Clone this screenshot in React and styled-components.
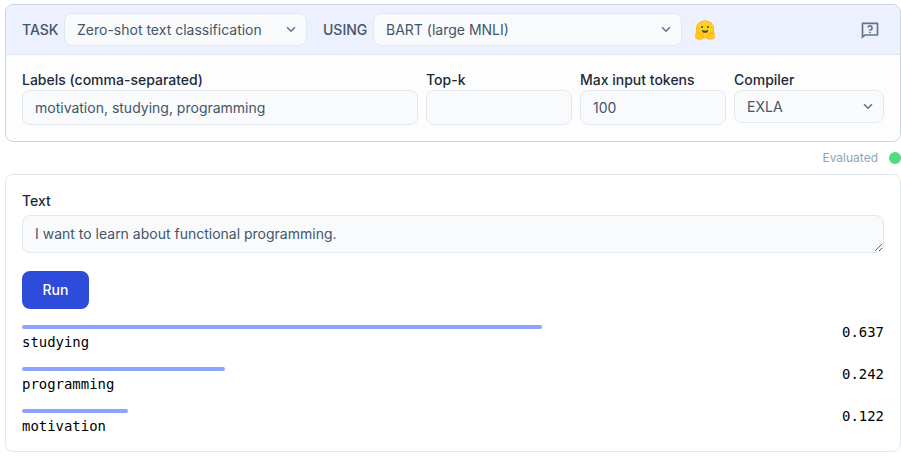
import React from "react";
import styled, { createGlobalStyle, css } from "styled-components";
import { RiQuestionnaireLine } from "react-icons/ri";

const GlobalStyle = createGlobalStyle`
  *, *::before, *::after { box-sizing: border-box; }
  body {
    margin: 0;
    background: #fff;
    font-family: Inter, sans-serif;
    font-size: 14px;
    line-height: 20px;
  }
`;

const Page = styled.main`
  display: flex;
  flex-direction: column;
  width: 901px;
  height: 457px;
  padding: 4px 0 0 5px;
`;

const SmartCell = styled.section`
  height: 138px;
  border: 1px solid #cad5e0;
  border-radius: 8px;
  background: #fdfdfd;
  overflow: hidden;
`;

const Header = styled.header`
  display: flex;
  align-items: center;
  height: 50px;
  padding: 0 16px;
  border-bottom: 1px solid #e1e8f0;
  background: #ecf0ff;
`;

const HeaderLabel = styled.span`
  width: ${({ $width }) => $width}px;
  color: #445668;
  font-weight: 500;
  white-space: nowrap;
`;

const control = css`
  display: block;
  margin: 0;
  border: 1px solid #e1e8f0;
  border-radius: 8px;
  background: #f8fafc;
  color: #445668;
  font: 400 14px/20px Inter, sans-serif;
  outline: none;
`;

const SelectBox = styled.div`
  display: flex;
  position: relative;
  width: ${({ $width }) => $width}px;
  margin-right: ${({ $gap = 0 }) => $gap}px;
`;

const SelectControl = styled.select`
  ${control}
  appearance: none;
  width: 100%;
  height: 33px;
  padding: 0 32px 0 12px;
`;

const Chevron = styled.svg`
  position: absolute;
  right: 11px;
  top: 13px;
  width: 10px;
  height: 7px;
  pointer-events: none;
`;

const HelpIcon = styled(RiQuestionnaireLine)`
  margin-left: auto;
  margin-right: 4px;
  color: #61758a;
`;

const Fields = styled.div`
  display: grid;
  grid-template-columns: 396px 146px 146px 150px;
  column-gap: 8px;
  padding: 15px 16px;
`;

const Field = styled.label`
  display: flex;
  flex-direction: column;
`;

const FieldLabel = styled.span`
  color: #1c2a3a;
  font-weight: 500;
  white-space: nowrap;
`;

const Input = styled.input`
  ${control}
  width: 100%;
  height: 35px;
  padding: 0 12px;
`;

const Status = styled.div`
  display: flex;
  align-items: center;
  justify-content: flex-end;
  gap: 11px;
  height: 32px;
  color: #91a4b7;
  font-size: 12px;
  line-height: 16px;
`;

const StatusDot = styled.span`
  width: 12px;
  height: 12px;
  border-radius: 50%;
  background: #4ade80;
`;

const Output = styled.section`
  height: 278px;
  padding: 16px;
  border: 1px solid #e1e8f0;
  border-radius: 8px;
`;

const TextArea = styled.textarea`
  ${control}
  width: 100%;
  height: 38px;
  margin-top: 4px;
  padding: 8px 12px;
  overflow: hidden;
  resize: vertical;
`;

const RunButton = styled.button`
  display: block;
  width: 67px;
  height: 38px;
  margin: 18px 0 16px;
  padding: 0;
  border: 0;
  border-radius: 8px;
  background: #2d4cdb;
  color: #fff;
  font: 500 14px/20px Inter, sans-serif;
`;

const Results = styled.div`
  display: flex;
  flex-direction: column;
  gap: 16px;
`;

const Result = styled.div`
  display: flex;
  justify-content: space-between;
  height: 26px;
  color: #000;
  font: 13.95px/20px "DejaVu Sans Mono", monospace;
`;

const Meter = styled.div`
  flex: 1;
`;

const Bar = styled.div`
  height: 4px;
  margin-bottom: 3px;
  border-radius: 2px;
  background: #8ba2ff;
`;

const Score = styled.span`
  margin-top: -3px;
`;

function Select({ value, width, gap }) {
  return (
    <SelectBox $width={width} $gap={gap}>
      <SelectControl defaultValue={value} aria-label={value}>
        <option>{value}</option>
      </SelectControl>
      <Chevron viewBox="0 0 10 7" fill="none" stroke="#61758a" strokeWidth="1.5">
        <path d="M1 1.2 5 5.2 9 1.2" />
      </Chevron>
    </SelectBox>
  );
}

function HuggingFace() {
  return (
    <svg width="22" height="20" viewBox="0 0 22 20" aria-label="Hugging Face">
      <circle cx="11" cy="9.3" r="9.1" fill="#ffac0b" />
      <circle cx="11" cy="9.3" r="8.4" fill="#ffd21e" />
      <g fill="#3a3b45">
        <circle cx="8" cy="6.9" r="1" />
        <circle cx="14" cy="6.9" r="1" />
        <path d="M7.9 9.9c1.6 1.1 4.6 1.1 6.2 0 .3 1.5-1.1 3-3.1 3s-3.4-1.5-3.1-3Z" />
      </g>
      <path d="M9.6 12.4q1.4-1.2 2.8 0-1.4.9-2.8 0Z" fill="#f04438" />
      <g fill="#ffad03">
        <circle cx="4.8" cy="7.7" r=".7" />
        <circle cx="17.2" cy="7.7" r=".7" />
      </g>
      <g fill="#ffc91b" stroke="#ff9d0b" strokeWidth=".55" strokeLinejoin="round">
        <path d="M2.1 13.1c-.7-1.7.8-2.1 1.6-.8l1 1.3c-.4-1.7.8-2.1 1.5-.7l.9 1.4c1.1-1.1 1.9-.3 1.5.7 1.3 2 .7 4.3-2.1 4.3-2.5 0-4.9-.4-5.1-1.8-.2-.8.1-1.2.5-1.5-.7-1.1-.3-2 .2-2.9Z" />
        <path d="M19.9 13.1c.7-1.7-.8-2.1-1.6-.8l-1 1.3c.4-1.7-.8-2.1-1.5-.7l-.9 1.4c-1.1-1.1-1.9-.3-1.5.7-1.3 2-.7 4.3 2.1 4.3 2.5 0 4.9-.4 5.1-1.8.2-.8-.1-1.2-.5-1.5.7-1.1.3-2-.2-2.9Z" />
      </g>
    </svg>
  );
}

const results = [
  { label: "studying", score: 0.637, length: 520 },
  { label: "programming", score: 0.242, length: 203 },
  { label: "motivation", score: 0.122, length: 106 },
];

export default function App() {
  return (
    <>
      <GlobalStyle />
      <Page>
        <SmartCell>
          <Header>
            <HeaderLabel $width={42}>TASK</HeaderLabel>
            <Select value="Zero-shot text classification" width={243} gap={16} />
            <HeaderLabel $width={50}>USING</HeaderLabel>
            <Select value="BART (large MNLI)" width={309} gap={12} />
            <HuggingFace />
            <HelpIcon size={20} />
          </Header>
          <Fields>
            <Field>
              <FieldLabel>Labels (comma-separated)</FieldLabel>
              <Input defaultValue="motivation, studying, programming" />
            </Field>
            <Field>
              <FieldLabel>Top-k</FieldLabel>
              <Input />
            </Field>
            <Field>
              <FieldLabel>Max input tokens</FieldLabel>
              <Input defaultValue="100" />
            </Field>
            <Field>
              <FieldLabel>Compiler</FieldLabel>
              <Select value="EXLA" width={150} />
            </Field>
          </Fields>
        </SmartCell>
        <Status>
          Evaluated
          <StatusDot />
        </Status>
        <Output>
          <Field>
            <FieldLabel>Text</FieldLabel>
            <TextArea defaultValue="I want to learn about functional programming." rows={1} />
          </Field>
          <RunButton>Run</RunButton>
          <Results>
            {results.map(({ label, score, length }) => (
              <Result key={label}>
                <Meter>
                  <Bar style={{ width: length }} />
                  {label}
                </Meter>
                <Score>{score.toFixed(3)}</Score>
              </Result>
            ))}
          </Results>
        </Output>
      </Page>
    </>
  );
}
